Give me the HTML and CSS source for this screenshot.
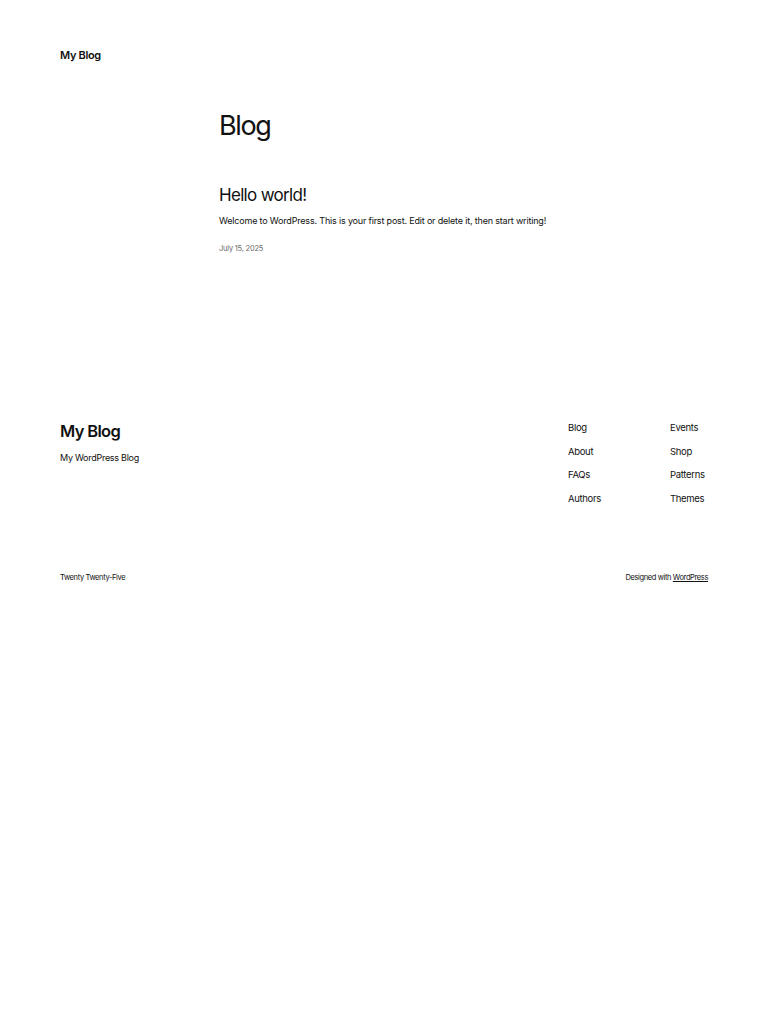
FILE: index.html
```html
<!DOCTYPE html>
<html lang="en">
<head>
<meta charset="utf-8">
<title>My Blog</title>
<link rel="stylesheet" href="styles.css">
</head>
<body>
<header class="site-header">
  <a class="site-title" href="#">My Blog</a>
</header>
<main class="main">
  <h1 class="page-title">Blog</h1>
  <article class="post">
    <h2 class="post-title">Hello world!</h2>
    <p class="post-excerpt">Welcome to WordPress. This is your first post. Edit or delete it, then start writing!</p>
    <div class="post-date">July 15, 2025</div>
  </article>
</main>
<footer class="site-footer">
  <div class="footer-top">
    <div class="footer-brand">
      <div class="footer-title">My Blog</div>
      <div class="footer-tagline">My WordPress Blog</div>
    </div>
    <nav class="footer-nav">
      <ul class="nav-col">
        <li>Blog</li>
        <li>About</li>
        <li>FAQs</li>
        <li>Authors</li>
      </ul>
      <ul class="nav-col">
        <li>Events</li>
        <li>Shop</li>
        <li>Patterns</li>
        <li>Themes</li>
      </ul>
    </nav>
  </div>
  <div class="footer-bottom">
    <span>Twenty Twenty-Five</span>
    <span>Designed with <a href="#" class="wp-link">WordPress</a></span>
  </div>
</footer>
</body>
</html>
```
FILE: styles.css
```css
* { box-sizing: border-box; }
html, body { margin: 0; padding: 0; background: #fff; }
body {
  font-family: Inter, "Noto Sans", sans-serif;
  color: #111;
  letter-spacing: -0.02em;
}
a { color: inherit; text-decoration: none; }

.site-header {
  padding: 43px 60px 0;
  height: 109px;
}
.site-title {
  font-size: 11px;
  font-weight: 600;
  line-height: 16px;
  letter-spacing: -0.03em;
}

.main {
  width: 330px;
  margin: 0 auto;
}
.page-title {
  margin: 0;
  font-size: 27px;
  font-weight: 400;
  line-height: 34px;
  letter-spacing: -0.05em;
}
.post { margin-top: 41px; }
.post-title {
  margin: 0;
  font-size: 17px;
  font-weight: 400;
  line-height: 22px;
  letter-spacing: -0.04em;
}
.post-excerpt {
  margin: 8px 0 0;
  font-size: 9px;
  line-height: 14px;
  letter-spacing: -0.02em;
  white-space: nowrap;
}
.post-date {
  margin-top: 15px;
  font-size: 7.5px;
  line-height: 12px;
  color: #6a6a6a;
  letter-spacing: -0.03em;
}

.site-footer {
  padding: 0 60px;
  margin-top: 164px;
}
.footer-top {
  display: flex;
  justify-content: space-between;
  height: 153px;
}
.footer-title {
  font-size: 16.5px;
  font-weight: 600;
  line-height: 24px;
  letter-spacing: -0.04em;
}
.footer-tagline {
  margin-top: 8px;
  font-size: 9px;
  line-height: 14px;
  letter-spacing: -0.03em;
}
.footer-nav {
  display: flex;
  width: 140px;
  padding-top: 2px;
}
.nav-col {
  list-style: none;
  margin: 0;
  padding: 0;
  width: 102px;
  display: flex;
  flex-direction: column;
  gap: 9.5px;
  font-size: 9.5px;
  line-height: 14px;
}
.nav-col:last-child { width: 38px; }
.footer-bottom {
  display: flex;
  justify-content: space-between;
  font-size: 7.5px;
  line-height: 12px;
  letter-spacing: -0.05em;
}
.wp-link { text-decoration: underline; }
```
